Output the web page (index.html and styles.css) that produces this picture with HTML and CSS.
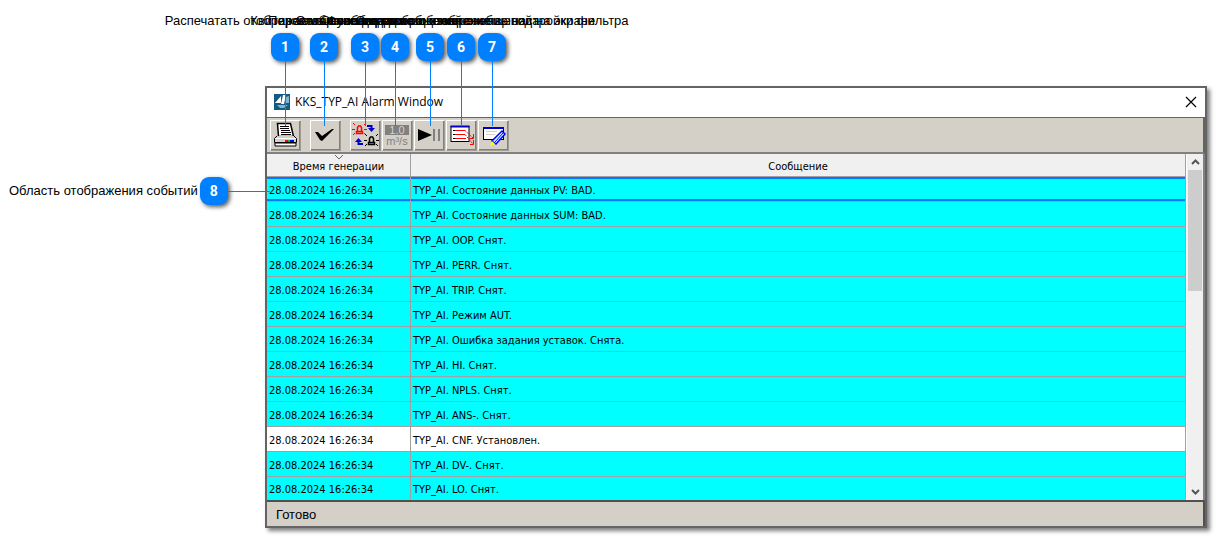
FILE: index.html
```html
<!DOCTYPE html>
<html lang="ru">
<head>
<meta charset="utf-8">
<title>KKS_TYP_AI Alarm Window</title>
<link rel="stylesheet" href="styles.css">
</head>
<body>
<main class="figure">
  <section class="window">
    <header class="titlebar">
      <svg class="logo" width="16" height="16" viewBox="0 0 16 16"><rect width="16" height="16" fill="#155a80"/><path d="M1 9L7 2V9Z" fill="#fff"/><path d="M9 1H12L10 10H7Z" fill="#fff"/><path d="M12 3L15 2V9H11Z" fill="#7fb5cf"/><path d="M3 11H14L10 14H6Z" fill="#7fb5cf"/></svg>
      <h1 class="title">KKS_TYP_AI Alarm Window</h1>
      <button class="close" aria-label="Закрыть"><svg width="12" height="12" viewBox="0 0 12 12"><path d="M1 1L11 11M11 1L1 11" stroke="#000" stroke-width="1.2"/></svg></button>
    </header>
    <div class="toolbar">
      <button class="tool" aria-label="Печать"><svg width="30" height="30" viewBox="0 0 30 30"><path d="M7.500 3.500H20.500L23.500 16.500H8.500Z" fill="#fff" stroke="#000" stroke-width="1.500"/><path d="M10 6.500H19M10 8.500H19M11 10.500H20M11 12.500H21M11 14.500H21" stroke="#000"/><path d="M7 16L4.500 18.500V22.500H26.500V18.500L24 16" fill="#d4d0c8" stroke="#000"/><path d="M5 18.500H26" stroke="#fff"/><path d="M5 23H26V26H5Z" fill="#fff" stroke="#000"/><path d="M15 21H18" stroke="#f00" stroke-width="2"/><path d="M18 21H20" stroke="#0c0" stroke-width="2"/><path d="M20 21H24" stroke="#00f" stroke-width="2"/></svg></button>
      <button class="tool gap-before" aria-label="Квитировать"><svg width="30" height="30" viewBox="0 0 30 30"><path d="M5 12L8 12L12 16L22 9L24 9L12 21L10 20Z" fill="#000"/></svg></button>
      <button class="tool gap-before" aria-label="Переключить"><svg width="30" height="30" viewBox="0 0 30 30" fill="none"><path d="M6.500 11.500H12.500V13.500H6.500ZM7.500 11V7.500L8.500 6H10.500L11.500 7.500V11" stroke="#f00" stroke-width="1.500"/><path d="M3 3L5 5M16 3L14 5M2 9.500H5M14 9.500H17M3 15L5 13M16 15L14 13" stroke="#f00"/><path d="M17 6H21.500V8" stroke="#00c" stroke-width="2"/><path d="M18 8H25L21.500 12Z" fill="#00c"/><path d="M13 24H8.500V21" stroke="#00c" stroke-width="2"/><path d="M5 22H12L8.500 18Z" fill="#00c"/><path d="M18.500 22.500H24.500V24.500H18.500ZM19.500 22V18.500L20.500 17H22.500L23.500 18.500V22" stroke="#000" stroke-width="1.500"/><path d="M15 14L17 16M28 14L26 16M14 20.500H17M26 20.500H29M15 26L17 24M28 26L26 24" stroke="#000"/></svg></button>
      <button class="tool" aria-label="Значения"><svg width="30" height="30" viewBox="0 0 30 30"><rect x="3" y="5" width="24" height="10" fill="#808080"/><text class="glyph" x="15" y="14" fill="#d4d0c8">1.0</text><text class="glyph" x="15" y="25" fill="#808080">m³/s</text></svg></button>
      <button class="tool" aria-label="Пуск и пауза"><svg width="30" height="30" viewBox="0 0 30 30"><path d="M4 9L18 15L4 21Z" fill="#000"/><path d="M20 9V21M25 9V21" stroke="#808080" stroke-width="2"/></svg></button>
      <button class="tool" aria-label="Список"><svg width="30" height="30" viewBox="0 0 30 30" fill="none"><rect x="5" y="6.500" width="18" height="15" fill="#fff" stroke="#000"/><path d="M4.500 6.500H23.500" stroke="#00c" stroke-width="2"/><path d="M7 10.500H9M7 14.500H9M7 18.500H9" stroke="#000"/><path d="M9 10.500H19M9 14.500H19M9 18.500H20" stroke="#f00"/><path d="M19 10.500L27 18M19 14.500L27 24" stroke="#f00" stroke-dasharray="2 1"/><path d="M27.500 14V18.500H24M27.500 20V24.500H24" stroke="#f00"/></svg></button>
      <button class="tool" aria-label="Фильтр"><svg width="30" height="30" viewBox="0 0 30 30"><rect x="5.500" y="7.500" width="20" height="12" fill="#fff" stroke="#000"/><path d="M5 8H26" stroke="#00c" stroke-width="2"/><path d="M8 11.500H19M8 14.500H17" stroke="#d4d0c8"/><path d="M24 11L27 14L18 24L14 21Z" fill="#cff" stroke="#00f" stroke-width="1.500"/><path d="M17 22L25 13" stroke="#00f"/><path d="M14 21L17 24L12 26Z" fill="#ff0"/></svg></button>
    </div>
    <div class="list">
      <table class="events">
        <colgroup><col class="col-time"><col></colgroup>
        <thead><tr><th scope="col">Время генерации<svg class="sort" width="8" height="5" viewBox="0 0 8 5"><path d="M0 0L4 4L8 0" fill="none" stroke="#666"/></svg></th><th scope="col">Сообщение</th></tr></thead>
        <tbody>
          <tr class="selected"><td>28.08.2024 16:26:34</td><td>TYP_AI. Состояние данных PV: BAD.</td></tr>
          <tr><td>28.08.2024 16:26:34</td><td>TYP_AI. Состояние данных SUM: BAD.</td></tr>
          <tr><td>28.08.2024 16:26:34</td><td>TYP_AI. OOP. Снят.</td></tr>
          <tr><td>28.08.2024 16:26:34</td><td>TYP_AI. PERR. Снят.</td></tr>
          <tr><td>28.08.2024 16:26:34</td><td>TYP_AI. TRIP. Снят.</td></tr>
          <tr><td>28.08.2024 16:26:34</td><td>TYP_AI. Режим AUT.</td></tr>
          <tr><td>28.08.2024 16:26:34</td><td>TYP_AI. Ошибка задания уставок. Снята.</td></tr>
          <tr><td>28.08.2024 16:26:34</td><td>TYP_AI. HI. Снят.</td></tr>
          <tr><td>28.08.2024 16:26:34</td><td>TYP_AI. NPLS. Снят.</td></tr>
          <tr><td>28.08.2024 16:26:34</td><td>TYP_AI. ANS-. Снят.</td></tr>
          <tr class="set"><td>28.08.2024 16:26:34</td><td>TYP_AI. CNF. Установлен.</td></tr>
          <tr><td>28.08.2024 16:26:34</td><td>TYP_AI. DV-. Снят.</td></tr>
          <tr><td>28.08.2024 16:26:34</td><td>TYP_AI. LO. Снят.</td></tr>
        </tbody>
      </table>
      <div class="scrollbar">
        <button class="arrow" aria-label="Вверх"><svg width="9" height="6" viewBox="0 0 9 6"><path d="M1 5L4.500 1.500L8 5" fill="none" stroke="#555" stroke-width="2"/></svg></button>
        <div class="thumb"></div>
        <button class="arrow down" aria-label="Вниз"><svg width="9" height="6" viewBox="0 0 9 6"><path d="M1 1L4.500 4.500L8 1" fill="none" stroke="#555" stroke-width="2"/></svg></button>
      </div>
    </div>
    <footer class="status">Готово</footer>
  </section>

  <div class="callout c1"><span class="label">Распечатать отображаемые сообщения</span><span class="badge">1</span></div>
  <div class="callout c2"><span class="label">Квитировать сообщения</span><span class="badge">2</span></div>
  <div class="callout c3"><span class="label">Переключение вида сообщений</span><span class="badge">3</span></div>
  <div class="callout c4"><span class="label">Отображение единиц измерения</span><span class="badge">4</span></div>
  <div class="callout c5"><span class="label">Остановка и возобновление вывода</span><span class="badge">5</span></div>
  <div class="callout c6"><span class="label">Функция отображения сообщений на экране</span><span class="badge">6</span></div>
  <div class="callout c7"><span class="label">Создание и отображение настройки фильтра</span><span class="badge">7</span></div>
  <div class="side-callout"><span class="label">Область отображения событий</span><span class="badge">8</span></div>
</main>
</body>
</html>
```
FILE: styles.css
```css
* { box-sizing: border-box; }
body { margin: 0; background: #fff; color: #000; font-family: "Liberation Sans", Arial, sans-serif; }
button { padding: 0; border: 0; background: none; font: inherit; }
.figure { position: relative; padding: 86px 9px 8px 265px; }

.window { border: 2px solid #646464; background: #fff; box-shadow: 3px 3px 4px rgba(0, 0, 0, 0.5); }
.titlebar { display: flex; align-items: center; height: 29px; padding: 0 8px 2px 7px; }
.title { flex: 1; margin: 0 0 0 5px; font: 400 12px/16px "Open Sans", sans-serif; }
.close { display: flex; }
.toolbar { display: flex; align-items: center; gap: 2px; height: 37px; padding: 0 3px; background: #d4d0c8; border-top: 1px solid #646464; border-bottom: 2px solid #808080; border-right: 2px solid #646464; }
.tool { display: flex; flex: none; width: 30px; height: 30px; background: #d4d0c8; box-shadow: inset 1px 1px #fff, inset -1px -1px #808080, 1px 1px #a09c94; }
.gap-before { margin-left: 8px; }
.glyph { font: 11px "Liberation Sans", Arial, sans-serif; text-anchor: middle; }

.list { display: flex; background: #f0f0f0; border-right: 2px solid #808080; }
.events { flex: 1; table-layout: fixed; border-collapse: separate; border-spacing: 0; font: 11px/16px "DejaVu Sans Condensed", "DejaVu Sans", sans-serif; font-stretch: condensed; }
.col-time { width: 144px; }
.events th { position: relative; height: 23px; padding: 3px 0 0; font-weight: 400; background: #f0f0f0; border-right: 1px solid #a0a0a0; border-bottom: 1px solid #a0a0a0; }
.events td { height: 25px; padding: 3px 2px 0; background: #0ff; border-right: 1px solid #a0a0a0; border-bottom: 1px solid #a0a0a0; white-space: nowrap; }
.events .selected td { box-shadow: inset 0 2px #0078ff, inset 0 -2px #0078ff; }
.events .set td { background: #fff; }
.events tbody tr:last-child td { height: 23px; border-bottom: 0; }
.sort { position: absolute; top: 1px; left: 50%; margin-left: -4px; }
.scrollbar { display: flex; flex-direction: column; width: 17px; padding: 0 1px; border-left: 1px solid #fff; }
.arrow { display: flex; align-items: center; justify-content: center; height: 16px; }
.arrow.down { margin-top: auto; }
.thumb { height: 121px; background: #cdcdcd; }
.status { height: 26px; padding: 0 9px; background: #d4d0c8; border-top: 2px solid #505050; border-right: 2px solid #505050; font-size: 13px; line-height: 25px; }

.label { font-size: 13px; line-height: 16px; white-space: nowrap; }
.badge { position: relative; display: flex; flex: none; align-items: center; justify-content: center; width: 28px; height: 28px; border-radius: 9px; background: #0080ff; color: #fff; font: 700 14px/16px Roboto, "Liberation Sans", sans-serif; box-shadow: 2px 2px 4px rgba(0, 0, 0, 0.65); }
.badge::after { content: ""; position: absolute; background: #0080ff; }
.callout { position: absolute; top: 13px; display: flex; flex-direction: column; align-items: center; gap: 4px; width: 0; }
.callout .badge::after { top: 28px; width: 1px; height: 65px; }
.c1 { left: 285px; }
.c2 { left: 324px; }
.c3 { left: 365px; }
.c4 { left: 395px; }
.c5 { left: 430px; }
.c6 { left: 461px; }
.c7 { left: 492px; }
.side-callout { position: absolute; top: 177px; left: 9px; display: flex; align-items: center; gap: 2px; }
.side-callout .badge::after { left: 28px; width: 42px; height: 1px; }
```
